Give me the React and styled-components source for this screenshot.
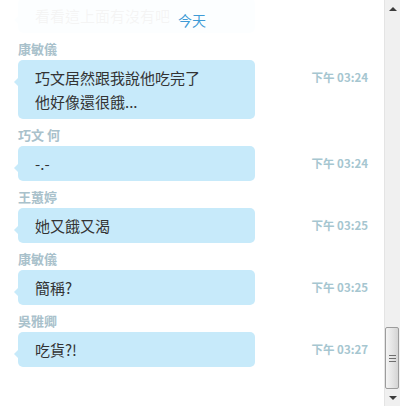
import React from "react";
import styled, { createGlobalStyle } from "styled-components";

const GlobalStyle = createGlobalStyle`
	html, body {
		margin: 0;
		padding: 0;
		background: #fff;
		overflow: hidden;
	}
	body {
		font-family: "Noto Sans CJK TC", "Noto Sans", sans-serif;
	}
`;

const messages = [
	{ name: "", text: ["看看這上面有沒有吧"], time: "", faded: true },
	{ name: "康敏儀", text: ["巧文居然跟我說他吃完了", "他好像還很餓..."], time: "下午 03:24" },
	{ name: "巧文 何", text: ["-.-"], time: "下午 03:24" },
	{ name: "王蕙婷", text: ["她又餓又渴"], time: "下午 03:25" },
	{ name: "康敏儀", text: ["簡稱?"], time: "下午 03:25" },
	{ name: "吳雅卿", text: ["吃貨?!"], time: "下午 03:27" },
];

const App = () => {
	return (
		<>
			<GlobalStyle />
			<Window>
				<ChatArea>
					<DateHeader>今天</DateHeader>
					<List>
						{messages.map((m, i) => (
							<Entry key={i}>
								{m.name && <Name>{m.name}</Name>}
								<Row>
									<Bubble>
										{m.text.map((line, j) => (
											<div key={j}>{line}</div>
										))}
									</Bubble>
									<Time>{m.time}</Time>
								</Row>
							</Entry>
						))}
					</List>
				</ChatArea>
				<ScrollBar>
					<ArrowButton>
						<Arrow $up />
					</ArrowButton>
					<Track />
					<Thumb>
						<Grip />
						<Grip />
						<Grip />
					</Thumb>
					<ArrowButton>
						<Arrow />
					</ArrowButton>
				</ScrollBar>
			</Window>
		</>
	);
};

const Window = styled.div`
	display: flex;
	width: 400px;
	height: 406px;
	overflow: hidden;
`;

const ChatArea = styled.div`
	position: relative;
	flex: 1;
	overflow: hidden;
`;

const DateHeader = styled.div`
	position: absolute;
	top: 0;
	left: 0;
	right: 0;
	height: 38px;
	line-height: 41px;
	text-align: center;
	font-size: 14px;
	color: #3f9bd6;
	background: rgba(255, 255, 255, 0.95);
	z-index: 2;
`;

const List = styled.div`
	display: flex;
	flex-direction: column;
	margin-top: -2px;
`;

const Entry = styled.div`
	padding-left: 18px;
	margin-bottom: 9px;
`;

const Name = styled.div`
	font-size: 13px;
	font-weight: bold;
	line-height: 14px;
	color: #a9c1cb;
	margin-bottom: 4px;
`;

const Row = styled.div`
	display: flex;
	align-items: flex-start;
`;

const Bubble = styled.div`
	position: relative;
	box-sizing: border-box;
	width: 237px;
	padding: 5.5px 17px;
	background: #c7eafa;
	border-radius: 5px;
	font-size: 15px;
	line-height: 24px;
	color: #333;
	&::before {
		content: "";
		position: absolute;
		left: -4px;
		top: 18px;
		border-top: 4px solid transparent;
		border-bottom: 4px solid transparent;
		border-right: 4px solid #c7eafa;
	}
`;

const Time = styled.div`
	flex: 1;
	text-align: right;
	padding-right: 16px;
	font-size: 11.5px;
	font-weight: bold;
	line-height: 35px;
	color: #a6c6d0;
	white-space: nowrap;
`;

const ScrollBar = styled.div`
	display: flex;
	flex-direction: column;
	width: 16px;
	box-sizing: border-box;
	background: #f0f0f0;
	border-left: 1px solid #e4e4e4;
`;

const ArrowButton = styled.div`
	height: 17px;
	display: flex;
	align-items: center;
	justify-content: center;
`;

const Arrow = styled.div`
	width: 0;
	height: 0;
	border-left: 4px solid transparent;
	border-right: 4px solid transparent;
	${(p) =>
		p.$up
			? "border-bottom: 4px solid #3c3c3c;"
			: "border-top: 4px solid #3c3c3c;"}
`;

const Track = styled.div`
	flex: 1;
`;

const Thumb = styled.div`
	height: 62px;
	margin: 0 1px 0 0;
	box-sizing: border-box;
	border: 1px solid #9c9c9c;
	border-radius: 2px;
	background: linear-gradient(to right, #f4f4f4, #e2e2e2 60%, #d4d4d4);
	display: flex;
	flex-direction: column;
	align-items: center;
	justify-content: center;
	gap: 2px;
`;

const Grip = styled.div`
	width: 7px;
	height: 1px;
	background: #6e6e6e;
`;

export default App;
